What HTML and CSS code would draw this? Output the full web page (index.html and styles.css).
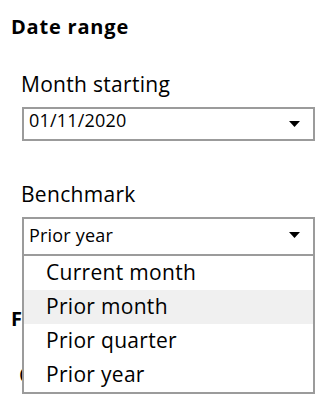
FILE: index.html
```html
<!DOCTYPE html>
<html>
<head>
<meta charset="utf-8">
<link rel="stylesheet" href="styles.css">
</head>
<body>
<div class="panel">
  <h2 class="heading">Date range</h2>
  <div class="field field-month">
    <div class="label">Month starting</div>
    <div class="select">
      <span class="value">01/11/2020</span>
      <svg class="caret" width="11" height="6" viewBox="0 0 11 6"><path d="M0 0H11L5.5 6Z" fill="#000"/></svg>
    </div>
  </div>
  <div class="field field-bench">
    <div class="label">Benchmark</div>
    <div class="select select-open">
      <span class="value">Prior year</span>
      <svg class="caret" width="11" height="6" viewBox="0 0 11 6"><path d="M0 0H11L5.5 6Z" fill="#000"/></svg>
      <ul class="menu">
        <li class="option">Current month</li>
        <li class="option option-hover">Prior month</li>
        <li class="option">Prior quarter</li>
        <li class="option">Prior year</li>
      </ul>
    </div>
  </div>
  <h2 class="heading heading-filters">Filters</h2>
  <div class="field field-cat">
    <div class="label label-cat">Currency</div>
  </div>
</div>
</body>
</html>
```
FILE: styles.css
```css
html, body {
  margin: 0;
  padding: 0;
  background: #fff;
}
body {
  font-family: "Open Sans", "Noto Sans", sans-serif;
  color: #000;
  width: 326px;
  height: 396px;
  overflow: hidden;
}
.panel {
  padding: 14px 0 0 11px;
}
.heading {
  margin: 0;
  font-size: 20px;
  font-weight: 700;
  line-height: 26px;
  letter-spacing: 0.8px;
}
.field {
  margin-left: 11px;
}
.field-month {
  margin-top: 30px;
}
.field-bench {
  margin-top: 39px;
}
.field-cat {
  margin-top: 29px;
}
.label {
  font-size: 21px;
  line-height: 28px;
  margin: 0 0 9px -1px;
  letter-spacing: 0.3px;
}
.label-cat {
  margin-left: -3px;
}
.select {
  position: relative;
  box-sizing: border-box;
  width: 293px;
  height: 34px;
  border: 2px solid #9b9b9b;
  display: flex;
  align-items: flex-start;
  justify-content: space-between;
  padding: 2px 13px 0 5px;
  font-size: 18px;
  background: #fff;
}
.value {
  line-height: 18px;
  letter-spacing: 0.2px;
}
.caret {
  display: block;
  margin-top: 10px;
}
.select-open {
  height: 39px;
  padding-top: 7px;
}
.select-open .caret {
  margin-top: 6px;
}
.menu {
  position: absolute;
  left: -2px;
  top: calc(100% + 2px);
  width: 293px;
  box-sizing: border-box;
  margin: 0;
  padding: 0;
  list-style: none;
  background: #fff;
  border: 2px solid #9b9b9b;
  border-top: none;
  z-index: 2;
}
.option {
  height: 34px;
  line-height: 32px;
  font-size: 21px;
  padding-left: 22px;
  letter-spacing: 0.3px;
}
.option-hover {
  background: #f0f0f0;
}
.heading-filters {
  margin-top: 50px;
}
```
